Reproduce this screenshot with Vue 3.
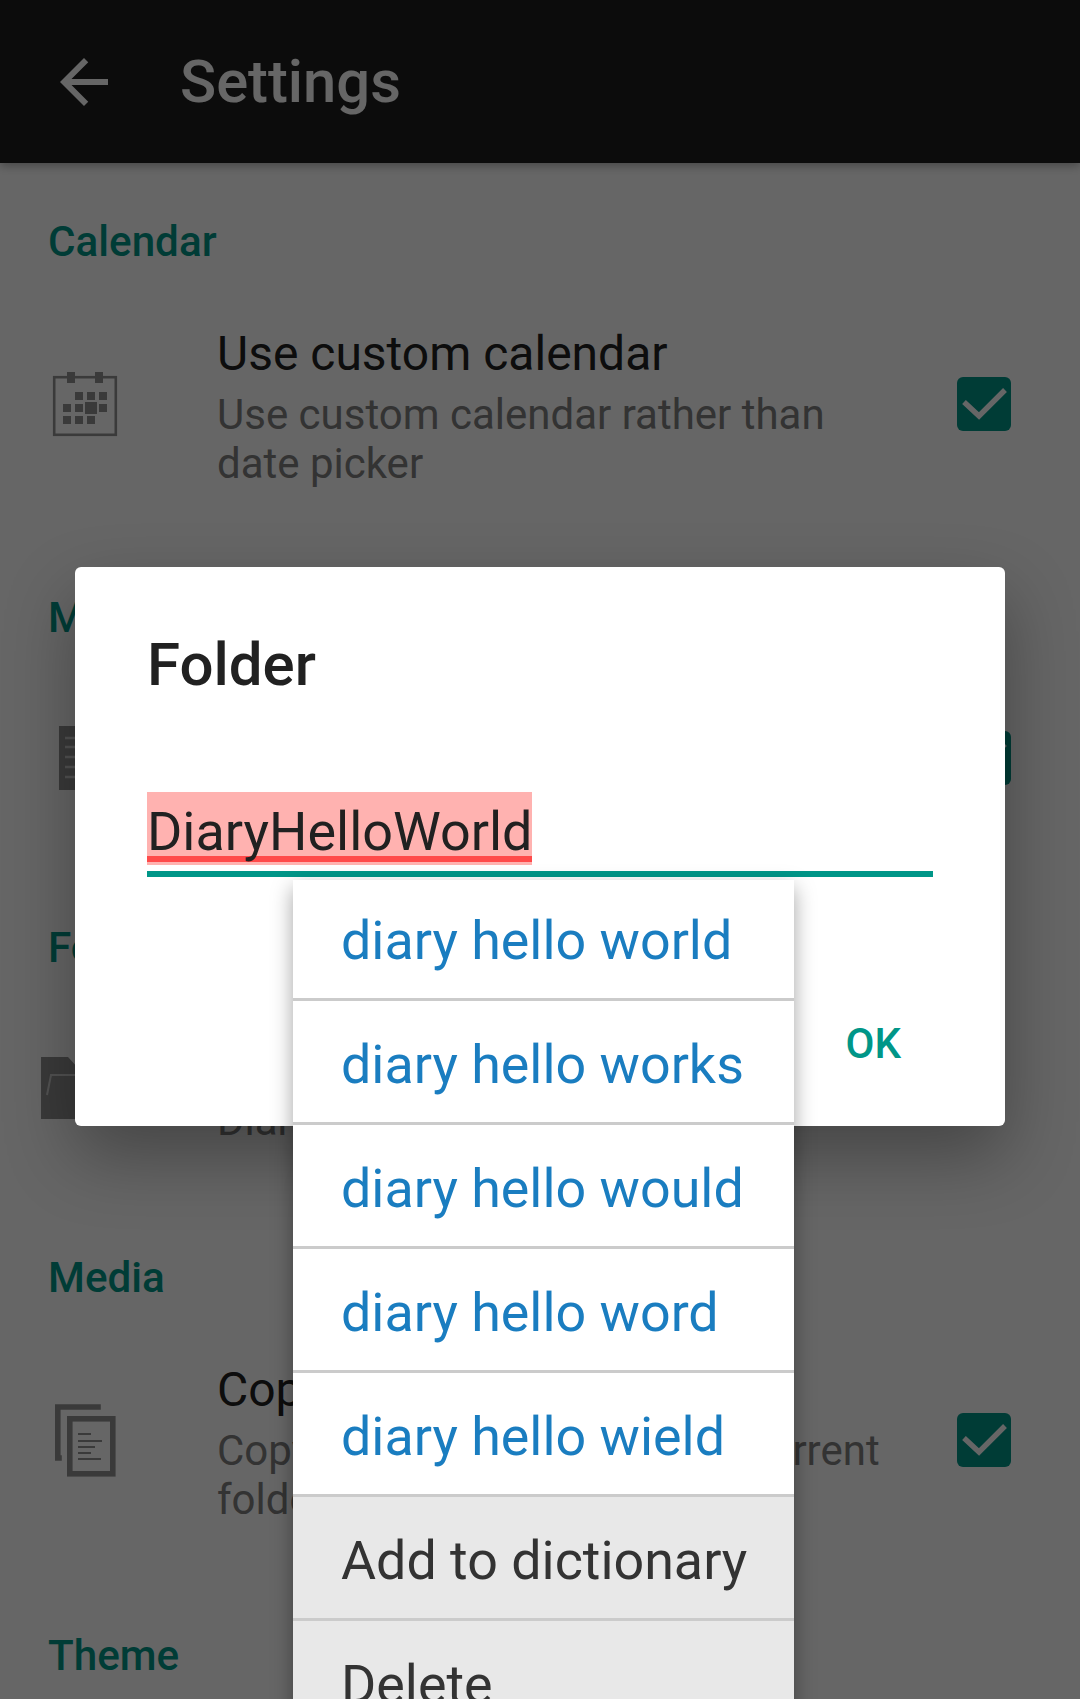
<script setup>
const sections = [
  {
    title: "Calendar",
    rows: [{ icon: "calendar", title: "Use custom calendar", sub: "Use custom calendar rather than date picker", tall: true }]
  },
  {
    title: "Memo",
    rows: [{ icon: "memo", title: "Show memo", sub: "Show memo in the list" }]
  },
  {
    title: "Folder",
    rows: [{ icon: "folder", title: "Folder", sub: "DiaryHelloWorld", noCheck: true }]
  },
  {
    title: "Media",
    rows: [{ icon: "copy", title: "Copy media", sub: "Copy photos and files to the current folder", tall: true }]
  },
  { title: "Theme", rows: [] }
]

const suggestions = ["diary hello world", "diary hello works", "diary hello would", "diary hello word", "diary hello wield"]
const actions = ["Add to dictionary", "Delete"]
</script>

<template>
  <div class="screen">
    <header class="toolbar">
      <svg class="back" viewBox="0 0 24 24">
        <path d="M20 11H7.83l5.59-5.59L12 4l-8 8 8 8 1.41-1.41L7.83 13H20v-2z" />
      </svg>
      <h1>Settings</h1>
    </header>

    <section v-for="section in sections" :key="section.title" class="section">
      <h2>{{ section.title }}</h2>
      <div v-for="row in section.rows" :key="row.title" class="row" :class="{ tall: row.tall }">
        <div class="icon-cell">
          <svg v-if="row.icon === 'calendar'" class="pref-icon" viewBox="0 0 72 72">
            <rect x="5.2" y="9.2" width="61.6" height="57.6" fill="none" stroke="#919191" stroke-width="2.6" />
            <rect x="18" y="4" width="8" height="11" />
            <rect x="46" y="4" width="8" height="11" />
            <rect x="26" y="24" width="8" height="8" />
            <rect x="38" y="24" width="8" height="8" />
            <rect x="50" y="24" width="8" height="8" />
            <rect x="14" y="36" width="8" height="8" />
            <rect x="26" y="36" width="8" height="8" />
            <rect x="36" y="34" width="12" height="12" />
            <rect x="50" y="36" width="8" height="8" />
            <rect x="14" y="48" width="8" height="8" />
            <rect x="26" y="48" width="8" height="8" />
            <rect x="38" y="48" width="8" height="8" />
          </svg>
          <svg v-else-if="row.icon === 'memo'" class="pref-icon" viewBox="0 0 72 72">
            <rect x="10" y="4" width="54" height="64" />
            <path d="M16 16h42M16 25h42M16 35h42M16 45h42M16 55h42" stroke="#fff" stroke-width="2.5" fill="none" opacity=".55" />
          </svg>
          <svg v-else-if="row.icon === 'folder'" class="pref-icon" viewBox="0 0 72 72">
            <path d="M-8 5h27l10 11h36v51H-8z" />
            <path d="M-2 43l4-20h60" stroke="#fff" stroke-width="2" fill="none" opacity=".55" />
          </svg>
          <svg v-else class="pref-icon" viewBox="0 0 72 72">
            <path d="M51.800 3H8.800v51h4" fill="none" stroke="#919191" stroke-width="5.6" />
            <rect x="20.800" y="14.800" width="43" height="55" fill="none" stroke="#919191" stroke-width="5.6" />
            <path d="M29 30h13M29 37h24M29 43h17M29 49h13M29 55h23" stroke="#919191" stroke-width="2" fill="none" />
          </svg>
        </div>
        <div class="text-cell">
          <div class="row-title">{{ row.title }}</div>
          <div class="row-sub">{{ row.sub }}</div>
        </div>
        <div v-if="!row.noCheck" class="checkbox">
          <svg viewBox="0 0 54 54">
            <path d="M7 25l15 14L48 13" fill="none" stroke="#fff" stroke-width="5.4" />
          </svg>
        </div>
      </div>
    </section>

    <div class="scrim"></div>

    <div class="dialog">
      <h3>Folder</h3>
      <div class="field">
        <span class="misspelled">DiaryHelloWorld</span>
      </div>
      <div class="dialog-actions">
        <button>OK</button>
      </div>
    </div>

    <div class="popup">
      <div v-for="word in suggestions" :key="word" class="item">{{ word }}</div>
      <div v-for="word in actions" :key="word" class="item grey">{{ word }}</div>
    </div>
  </div>
</template>

<style>
html,
body {
  margin: 0;
  overflow: hidden;
  background: #fff;
}
</style>

<style scoped>
* {
  box-sizing: border-box;
}

.screen {
  position: relative;
  width: 1080px;
  height: 1699px;
  overflow: hidden;
  background: #fff;
  font-family: Roboto, "Liberation Sans", sans-serif;
  color: #212121;
}

.toolbar {
  height: 163px;
  background: #1f1f1f;
  display: flex;
  align-items: center;
  padding-left: 48px;
  box-shadow: 0 3px 9px rgba(0, 0, 0, 0.3);
}

.back {
  width: 72px;
  height: 72px;
  fill: #fff;
}

.toolbar h1 {
  margin: 0 0 0 60px;
  font-size: 59.7px;
  font-weight: 500;
  color: #fff;
}

.section {
  padding-top: 52px;
}

.section:last-of-type {
  padding-top: 54px;
}

.section h2 {
  margin: 0 0 2px;
  padding-left: 48px;
  font-size: 42.2px;
  line-height: 54px;
  font-weight: 500;
  color: #009688;
}

.row {
  height: 222px;
  display: flex;
  align-items: center;
  padding-left: 49px;
}

.row.tall {
  height: 268px;
}

.row.tall .text-cell {
  padding-top: 3px;
}

.row.tall .icon-cell,
.row.tall .checkbox {
  margin-top: -2px;
}

.icon-cell {
  width: 168px;
  flex: none;
}

.pref-icon {
  display: block;
  width: 72px;
  height: 72px;
  fill: #919191;
  overflow: visible;
}

.text-cell {
  width: 740px;
  flex: none;
}

.row-title {
  font-size: 48px;
  line-height: 56px;
}

.row-sub {
  margin-top: 8px;
  width: 680px;
  font-size: 42px;
  line-height: 49px;
  color: #808080;
}

.checkbox {
  flex: none;
  width: 54px;
  height: 54px;
  border-radius: 6px;
  background: #009688;
}

.checkbox svg {
  display: block;
}

.scrim {
  position: absolute;
  inset: 0;
  background: rgba(0, 0, 0, 0.6);
}

.dialog {
  position: absolute;
  left: 75px;
  top: 567px;
  width: 930px;
  height: 559px;
  padding: 62px 0 0 72px;
  background: #fff;
  border-radius: 6px;
  box-shadow: 0 30px 70px rgba(0, 0, 0, 0.32);
}

.dialog h3 {
  margin: 0;
  font-size: 60px;
  line-height: 72px;
  font-weight: 500;
}

.field {
  width: 786px;
  margin-top: 91px;
  height: 85px;
  border-bottom: 6px solid #009688;
}

.misspelled {
  display: inline-block;
  height: 73px;
  font-size: 53.9px;
  line-height: 79px;
  background: linear-gradient(to bottom, #ffb2b0 64px, #ff4a4a 64px, #ff4a4a 70px, #ffb2b0 70px);
}

.dialog-actions {
  display: flex;
  justify-content: flex-end;
  padding-right: 104px;
  margin-top: 142px;
}

.dialog-actions button {
  padding: 0;
  border: none;
  background: none;
  font-family: inherit;
  font-size: 42px;
  line-height: 49px;
  font-weight: 500;
  color: #009688;
}

.popup {
  position: absolute;
  left: 293px;
  top: 880px;
  width: 501px;
  background: #fff;
  box-shadow: 0 8px 20px rgba(0, 0, 0, 0.36);
}

.item {
  height: 124px;
  padding-left: 48px;
  font-size: 53.8px;
  line-height: 127px;
  color: #1a7dc0;
  border-bottom: 3px solid #cbcbcb;
  white-space: nowrap;
}

.item:first-child {
  height: 121px;
  line-height: 121px;
}

.item.grey {
  background: #e8e8e8;
  color: #333;
}
</style>
